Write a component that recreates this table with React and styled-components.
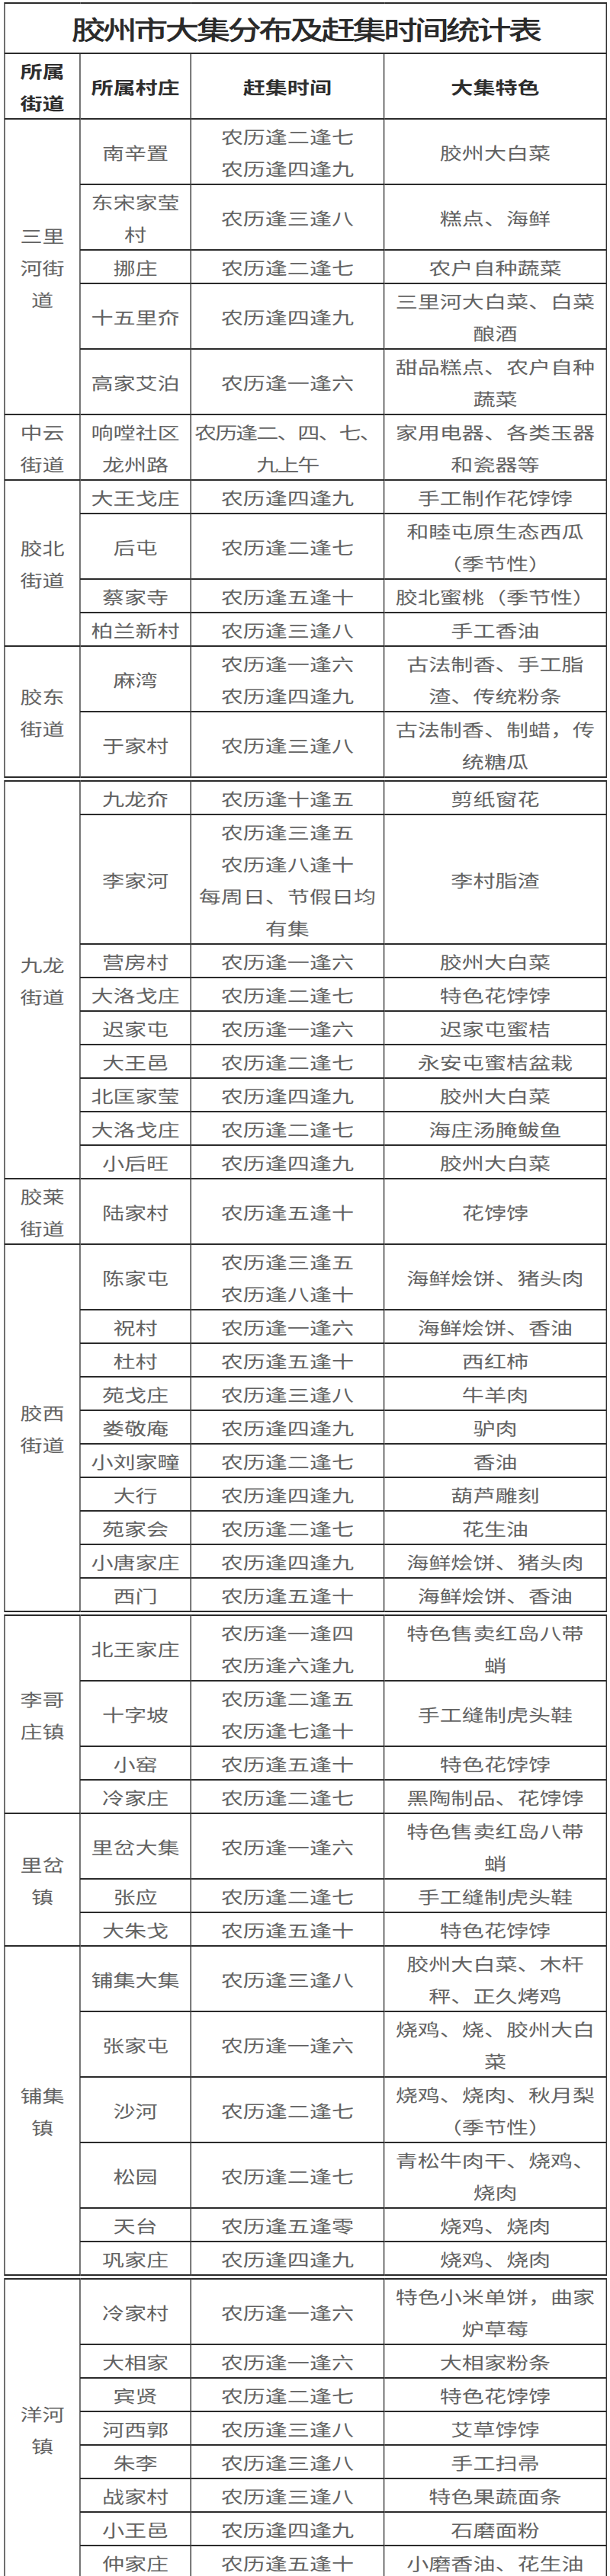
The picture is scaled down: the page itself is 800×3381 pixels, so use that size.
import React from 'react';
import styled, { createGlobalStyle } from 'styled-components';

const GlobalStyle = createGlobalStyle`
  html, body {
    margin: 0;
    padding: 0;
    background: #fff;
    overflow: hidden;
  }
  body {
    font-family: "Noto Sans CJK SC", "Noto Sans", sans-serif;
  }
`;

// the source picture is stretched sideways, so the sheet is drawn narrow and scaled out
const Page = styled.div`
  box-sizing: border-box;
  width: 606px;
  padding: 3px 0 0 4px;
  transform: scaleX(1.32);
  transform-origin: 0 0;
`;

const Sheet = styled.table`
  width: 598px;
  table-layout: fixed;
  border-collapse: collapse;
  margin-top: ${(p) => (p.$first ? 0 : 3)}px;
`;

const Col = styled.col`
  width: ${(p) => p.$w}px;
`;

const Cell = styled.td`
  padding: 0;
  border-left: 1.5px solid #2b2b2b;
  border-right: 1.5px solid #2b2b2b;
  border-top: 2px solid #2b2b2b;
  border-bottom: 2px solid #2b2b2b;
  text-align: center;
  vertical-align: middle;
  white-space: nowrap;
  font-size: 22px;
  line-height: 42px;
  font-weight: ${(p) => (p.$head ? 700 : 400)};
  color: ${(p) => (p.$head ? '#2e2e2e' : '#626262')};
  letter-spacing: ${(p) => (p.$tight ? '-1.5px' : '0')};
`;

const TitleCell = styled.td`
  padding: 0;
  border: 2px solid #2b2b2b;
  border-left-width: 1.5px;
  border-right-width: 1.5px;
  height: 64px;
  text-align: center;
  vertical-align: middle;
  font-size: 34px;
  font-weight: 500;
  letter-spacing: -3px;
  color: #2a2a2a;
  white-space: nowrap;
`;

const Lines = ({ text }) =>
  text.split('/').map((line, i, all) => (
    <React.Fragment key={i}>
      {line}
      {i < all.length - 1 && <br />}
    </React.Fragment>
  ));

const tables = [
  [
    {
      district: '三里/河街/道',
      rows: [
        ['南辛置', '农历逢二逢七/农历逢四逢九', '胶州大白菜'],
        ['东宋家莹/村', '农历逢三逢八', '糕点、海鲜'],
        ['挪庄', '农历逢二逢七', '农户自种蔬菜'],
        ['十五里夼', '农历逢四逢九', '三里河大白菜、白菜/酿酒'],
        ['高家艾泊', '农历逢一逢六', '甜品糕点、农户自种/蔬菜'],
      ],
    },
    {
      district: '中云/街道',
      rows: [['响嘡社区/龙州路', '农历逢二、四、七、/九上午', '家用电器、各类玉器/和瓷器等', true]],
    },
    {
      district: '胶北/街道',
      rows: [
        ['大王戈庄', '农历逢四逢九', '手工制作花饽饽'],
        ['后屯', '农历逢二逢七', '和睦屯原生态西瓜/（季节性）'],
        ['蔡家寺', '农历逢五逢十', '胶北蜜桃（季节性）'],
        ['柏兰新村', '农历逢三逢八', '手工香油'],
      ],
    },
    {
      district: '胶东/街道',
      rows: [
        ['麻湾', '农历逢一逢六/农历逢四逢九', '古法制香、手工脂/渣、传统粉条'],
        ['于家村', '农历逢三逢八', '古法制香、制蜡，传/统糖瓜'],
      ],
    },
  ],
  [
    {
      district: '九龙/街道',
      rows: [
        ['九龙夼', '农历逢十逢五', '剪纸窗花'],
        ['李家河', '农历逢三逢五/农历逢八逢十/每周日、节假日均/有集', '李村脂渣'],
        ['营房村', '农历逢一逢六', '胶州大白菜'],
        ['大洛戈庄', '农历逢二逢七', '特色花饽饽'],
        ['迟家屯', '农历逢一逢六', '迟家屯蜜桔'],
        ['大王邑', '农历逢二逢七', '永安屯蜜桔盆栽'],
        ['北匡家莹', '农历逢四逢九', '胶州大白菜'],
        ['大洛戈庄', '农历逢二逢七', '海庄汤腌鲅鱼'],
        ['小后旺', '农历逢四逢九', '胶州大白菜'],
      ],
    },
    {
      district: '胶莱/街道',
      rows: [['陆家村', '农历逢五逢十', '花饽饽']],
    },
    {
      district: '胶西/街道',
      rows: [
        ['陈家屯', '农历逢三逢五/农历逢八逢十', '海鲜烩饼、猪头肉'],
        ['祝村', '农历逢一逢六', '海鲜烩饼、香油'],
        ['杜村', '农历逢五逢十', '西红柿'],
        ['苑戈庄', '农历逢三逢八', '牛羊肉'],
        ['娄敬庵', '农历逢四逢九', '驴肉'],
        ['小刘家疃', '农历逢二逢七', '香油'],
        ['大行', '农历逢四逢九', '葫芦雕刻'],
        ['苑家会', '农历逢二逢七', '花生油'],
        ['小唐家庄', '农历逢四逢九', '海鲜烩饼、猪头肉'],
        ['西门', '农历逢五逢十', '海鲜烩饼、香油'],
      ],
    },
  ],
  [
    {
      district: '李哥/庄镇',
      rows: [
        ['北王家庄', '农历逢一逢四/农历逢六逢九', '特色售卖红岛八带/蛸'],
        ['十字坡', '农历逢二逢五/农历逢七逢十', '手工缝制虎头鞋'],
        ['小窑', '农历逢五逢十', '特色花饽饽'],
        ['冷家庄', '农历逢二逢七', '黑陶制品、花饽饽'],
      ],
    },
    {
      district: '里岔/镇',
      rows: [
        ['里岔大集', '农历逢一逢六', '特色售卖红岛八带/蛸'],
        ['张应', '农历逢二逢七', '手工缝制虎头鞋'],
        ['大朱戈', '农历逢五逢十', '特色花饽饽'],
      ],
    },
    {
      district: '铺集/镇',
      rows: [
        ['铺集大集', '农历逢三逢八', '胶州大白菜、木杆/秤、正久烤鸡'],
        ['张家屯', '农历逢一逢六', '烧鸡、烧、胶州大白/菜'],
        ['沙河', '农历逢二逢七', '烧鸡、烧肉、秋月梨/（季节性）'],
        ['松园', '农历逢二逢七', '青松牛肉干、烧鸡、/烧肉'],
        ['天台', '农历逢五逢零', '烧鸡、烧肉'],
        ['巩家庄', '农历逢四逢九', '烧鸡、烧肉'],
      ],
    },
  ],
  [
    {
      district: '洋河/镇',
      rows: [
        ['冷家村', '农历逢一逢六', '特色小米单饼，曲家/炉草莓'],
        ['大相家', '农历逢一逢六', '大相家粉条'],
        ['宾贤', '农历逢二逢七', '特色花饽饽'],
        ['河西郭', '农历逢三逢八', '艾草饽饽'],
        ['朱李', '农历逢三逢八', '手工扫帚'],
        ['战家村', '农历逢三逢八', '特色果蔬面条'],
        ['小王邑', '农历逢四逢九', '石磨面粉'],
        ['仲家庄', '农历逢五逢十', '小磨香油、花生油'],
      ],
    },
  ],
];

const Cols = () => (
  <colgroup>
    <Col $w={75} />
    <Col $w={110} />
    <Col $w={192} />
    <Col $w={221} />
  </colgroup>
);

const District = ({ district, rows }) =>
  rows.map(([village, time, feature, tight], i) => (
    <tr key={i}>
      {i === 0 && (
        <Cell rowSpan={rows.length}>
          <Lines text={district} />
        </Cell>
      )}
      <Cell>
        <Lines text={village} />
      </Cell>
      <Cell $tight={tight}>
        <Lines text={time} />
      </Cell>
      <Cell>
        <Lines text={feature} />
      </Cell>
    </tr>
  ));

const App = () => (
  <>
    <GlobalStyle />
    <Page>
      {tables.map((districts, t) => (
        <Sheet key={t} $first={t === 0}>
          <Cols />
          <tbody>
            {t === 0 && (
              <>
                <tr>
                  <TitleCell colSpan={4}>胶州市大集分布及赶集时间统计表</TitleCell>
                </tr>
                <tr>
                  <Cell $head>
                    所属
                    <br />
                    街道
                  </Cell>
                  <Cell $head>所属村庄</Cell>
                  <Cell $head>赶集时间</Cell>
                  <Cell $head>大集特色</Cell>
                </tr>
              </>
            )}
            {districts.map((d) => (
              <District key={d.district} {...d} />
            ))}
          </tbody>
        </Sheet>
      ))}
    </Page>
  </>
);

export default App;
